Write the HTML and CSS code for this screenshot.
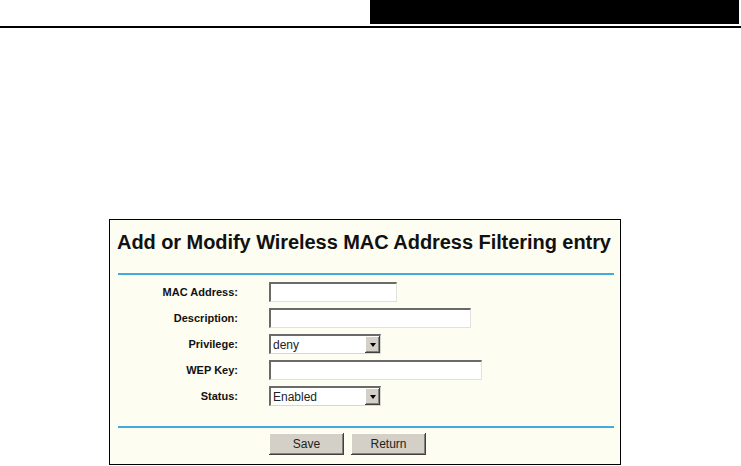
FILE: index.html
```html
<!DOCTYPE html>
<html lang="en">
<head>
    <meta charset="UTF-8">
    <meta name="viewport" content="width=device-width, initial-scale=1.0">
    <title>Wireless MAC Address Filtering</title>
    <link rel="stylesheet" href="styles.css">
</head>
<body>
    <div class="page-header">
        <div class="header-bar"></div>
    </div>

    <div class="panel">
        <h1 class="panel-title">Add or Modify Wireless MAC Address Filtering entry</h1>
        <div class="rule"></div>

        <form class="entry-form" onsubmit="return false;">
            <label for="mac">MAC Address:</label>
            <input type="text" id="mac" class="field w-mac">

            <label for="desc">Description:</label>
            <input type="text" id="desc" class="field w-desc">

            <label for="privilege">Privilege:</label>
            <span class="select-box">
                <select id="privilege">
                    <option>deny</option>
                    <option>allow</option>
                </select>
                <span class="select-arrow"></span>
            </span>

            <label for="wepkey">WEP Key:</label>
            <input type="text" id="wepkey" class="field w-key">

            <label for="status">Status:</label>
            <span class="select-box">
                <select id="status">
                    <option>Enabled</option>
                    <option>Disabled</option>
                </select>
                <span class="select-arrow"></span>
            </span>
        </form>

        <div class="rule"></div>
        <div class="buttons">
            <button class="btn">Save</button>
            <button class="btn">Return</button>
        </div>
    </div>
</body>
</html>
```

FILE: styles.css
```css
body {
    margin: 0;
    font-family: "Liberation Sans", Arial, sans-serif;
    background-color: #fff;
    color: #000;
}
.page-header {
    display: flex;
    justify-content: flex-end;
    height: 26px;
    padding-right: 2px;
    border-bottom: 2px solid #000;
}
.header-bar {
    width: 369px;
    height: 24px;
    background-color: #000;
}
.panel {
    width: 510px;
    margin: 191px 0 0 109px;
    padding-bottom: 9px;
    border: 1px solid #000;
    background-color: #fdfdf1;
}
.panel-title {
    margin: 0;
    padding: 10px 0 0 7px;
    font-size: 20px;
    line-height: 24px;
    font-weight: bold;
    letter-spacing: -0.06px;
    color: #111;
}
.rule {
    height: 2px;
    margin: 19px 6px 0 8px;
    background-color: #43abdc;
}
.entry-form {
    display: grid;
    grid-template-columns: 128px auto;
    grid-auto-rows: 20px;
    column-gap: 31px;
    row-gap: 6px;
    margin: 7px 0 20px;
}
.entry-form label {
    font-size: 11px;
    font-weight: bold;
    line-height: 20px;
    text-align: right;
    color: #111;
}
.field {
    box-sizing: border-box;
    height: 20px;
    margin: 0;
    padding: 0 3px;
    border-top: 2px solid #6a6a6a;
    border-left: 2px solid #6a6a6a;
    border-right: 1px solid #e2e1da;
    border-bottom: 1px solid #e2e1da;
    border-radius: 0;
    background-color: #fff;
    font-family: inherit;
    font-size: 12px;
}
.w-mac {
    width: 128px;
}
.w-desc {
    width: 202px;
}
.w-key {
    width: 213px;
}
.select-box {
    position: relative;
    display: block;
    width: 112px;
    height: 20px;
}
.select-box select {
    box-sizing: border-box;
    width: 100%;
    height: 100%;
    margin: 0;
    padding: 0 2px;
    -webkit-appearance: none;
    appearance: none;
    border-top: 2px solid #6a6a6a;
    border-left: 2px solid #6a6a6a;
    border-right: 1px solid #d8d7d0;
    border-bottom: 1px solid #d8d7d0;
    border-radius: 0;
    background-color: #fff;
    font-family: inherit;
    font-size: 12px;
    color: #222;
}
.select-arrow {
    position: absolute;
    top: 2px;
    right: 1px;
    width: 15px;
    height: 17px;
    display: flex;
    align-items: center;
    justify-content: center;
    background-color: #d4d0c8;
    box-shadow: inset -1px -1px #404040, inset 1px 1px #fff, inset -2px -2px #808080;
    pointer-events: none;
}
.select-arrow::before {
    content: "";
    border-left: 3px solid transparent;
    border-right: 3px solid transparent;
    border-top: 4px solid #000;
}
.rule + .buttons {
    margin-top: 5px;
}
.buttons {
    display: flex;
    gap: 7px;
    padding-left: 159px;
}
.btn {
    width: 75px;
    height: 22px;
    padding: 0;
    border: none;
    background-color: #d4d0c8;
    box-shadow: inset -1px -1px #404040, inset 1px 1px #fff, inset -2px -2px #808080;
    font-family: inherit;
    font-size: 12px;
    color: #222;
    cursor: pointer;
}
.btn:hover {
    background-color: #dcd9d2;
}
```
